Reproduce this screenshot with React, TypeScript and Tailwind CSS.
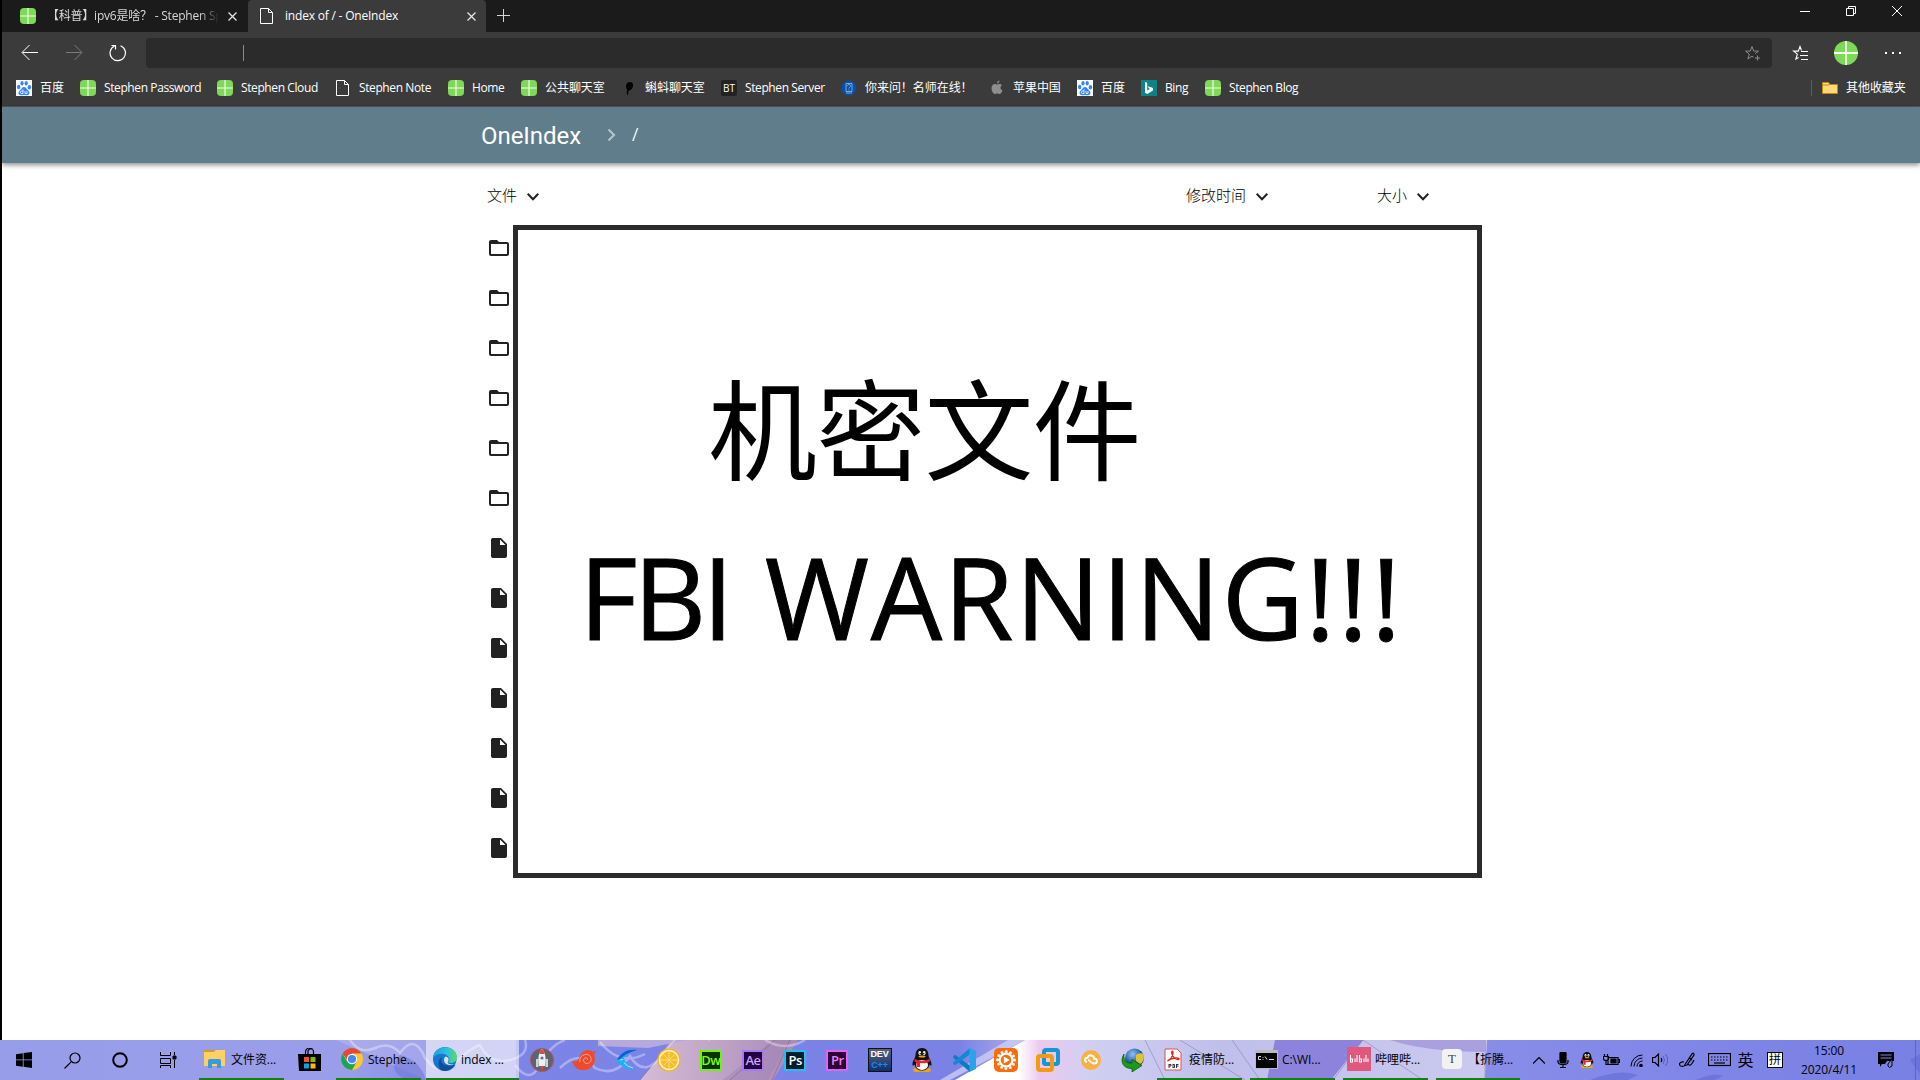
import React, { ReactNode } from "react";

const UI = "font-['Open_Sans','Noto_Sans_CJK_SC',sans-serif]";

function Clover({ round = false, size = 16 }: { round?: boolean; size?: number }) {
  return (
    <svg width={size} height={size} viewBox="0 0 16 16" className="shrink-0">
      <rect width="16" height="16" rx={round ? 8 : 4} fill="#7ed957" />
      <path d="M8 0v16M0 8h16" stroke="#f1fbe9" strokeWidth="1.2" />
    </svg>
  );
}

function Doc() {
  return (
    <svg width="16" height="16" viewBox="0 0 16 16" className="shrink-0" fill="none" stroke="#fff" strokeWidth="1">
      <path d="M1.5.5h8l4 4v11h-12zM9.500 .5v4h4" />
    </svg>
  );
}

function Baidu() {
  return (
    <svg width="16" height="16" viewBox="0 0 16 16" className="shrink-0">
      <rect width="16" height="16" fill="#fff" />
      <g fill="#3385ff">
        <ellipse cx="2.700" cy="7" rx="1.700" ry="2.200" />
        <ellipse cx="6" cy="3.300" rx="1.600" ry="2.300" />
        <ellipse cx="10.200" cy="3.300" rx="1.600" ry="2.300" />
        <ellipse cx="13.400" cy="7.300" rx="1.700" ry="2.200" />
        <path d="M8 7c2 0 2.500 2 4 3.200 2.500 2 1.500 5-1 5-1.500 0-2-.3-3-.3s-1.500.3-3 .3c-2.500 0-3.500-3-1-5C5.500 9 6 7 8 7z" />
      </g>
      <path d="M7 9.500v4H5.600a1.100 1.100 0 010-2.500H7M9 11v2.500h2V11" stroke="#fff" fill="none" strokeWidth=".8" />
    </svg>
  );
}

function Tadpole() {
  return (
    <svg width="16" height="16" viewBox="0 0 16 16" className="shrink-0">
      <path d="M7 2.500c3-1.500 5.500.3 5 3.500-.3 2.500-2 4.200-4 4.500-.8.500-.6 2.500-1.200 5-1.300-1.300-1.200-4.200-.5-6C4.200 7.500 4.800 3.800 7 2.500z" fill="#000" />
    </svg>
  );
}

function BT() {
  return (
    <span className="flex h-4 w-4 shrink-0 items-center justify-center rounded-[2px] bg-[#222] text-[10px] leading-none text-white">BT</span>
  );
}

function BlueSeal() {
  return (
    <svg width="16" height="16" viewBox="0 0 16 16" className="shrink-0">
      <circle cx="8" cy="8" r="7.500" fill="#0a4fa3" />
      <path d="M5 3.500h6v8H5zM6.500 6c0-2 3-2 3 0 0 1.200-1.500 1.200-1.500 2.500M8 9.500v1M5 13h6" fill="none" stroke="#a9cdf5" strokeWidth=".7" />
    </svg>
  );
}

function Apple() {
  return (
    <svg width="16" height="16" viewBox="0 0 16 16" className="shrink-0" fill="#8e8e8e">
      <path d="M10.500.5c.1 1.500-1 2.900-2.500 3C7.900 2 9.200.7 10.500.5zM8 4.600c.7 0 1.300-.7 2.600-.7 1 0 1.900.5 2.400 1.300-2.200 1.300-1.800 4.300.5 5.200-.5 1.400-1.700 3.600-3 3.600-.9 0-1.300-.5-2.300-.5s-1.400.5-2.300.5C4 14 2.500 10.700 2.500 8.300c0-2.700 1.600-4.300 3.300-4.300 1 0 1.600.6 2.200.6z" />
    </svg>
  );
}

function Bing() {
  return (
    <svg width="16" height="16" viewBox="0 0 16 16" className="shrink-0">
      <rect width="16" height="16" fill="#0c8484" />
      <path d="M4 2l2.200.8v7.700L9 9 7.700 8.300 6.900 6.200l5.100 1.800v2.600L6.200 14 4 12.700z" fill="#fff" />
    </svg>
  );
}

function YellowFolder() {
  return (
    <svg width="16" height="14" viewBox="0 0 16 14" className="shrink-0">
      <path d="M.5 1.500h6l1.500 2h7.500v9H.5z" fill="#ffd978" stroke="#b98b14" />
      <path d="M1 4h6l1-1" stroke="#b98b14" fill="none" />
    </svg>
  );
}

function Bookmark({ icon, text, className }: { icon: ReactNode; text: string; className: string }) {
  const latin = /^[\x20-\x7f]+$/.test(text);
  return (
    <div className={"flex shrink-0 items-center gap-2 whitespace-nowrap " + className}>
      {icon}
      <span className={latin ? "tracking-[-0.400px]" : "tracking-[-0.050px]"}>{text}</span>
    </div>
  );
}

function CloseX({ size = 9 }: { size?: number }) {
  return (
    <svg width={size} height={size} viewBox="0 0 9 9" stroke="#e8e8e8" strokeWidth="1.200" className="shrink-0">
      <path d="M.5.5l8 8M8.500.5l-8 8" />
    </svg>
  );
}

function TabStrip() {
  return (
    <div className="flex h-8 bg-[#1b1b1b] text-[12px] leading-8">
      <div className="flex w-[246px] items-center pl-[18px]">
        <Clover />
        <div className="ml-[11px] w-[173px] overflow-hidden whitespace-pre tracking-[-0.220px] text-[#d8d8d8] [mask-image:linear-gradient(to_right,black_152px,transparent_172px)]">
          【科普】ipv6是啥？ - Stephen Sp
        </div>
        <div className="ml-2"><CloseX /></div>
      </div>
      <div className="flex w-[238px] items-center rounded-t bg-[#3b3b3b] pl-[11px] text-white">
        <Doc />
        <div className="ml-[10px] w-[181px] whitespace-nowrap tracking-[-0.200px]">index of / - OneIndex</div>
        <div className="ml-[1px]"><CloseX /></div>
      </div>
      <svg width="14" height="14" viewBox="0 0 14 14" stroke="#d5d5d5" className="mt-[9px] ml-[11px]"><path d="M6.500 0v13M0 6.500h13" /></svg>
      <div className="ml-auto flex items-start gap-9 pt-[6px] pr-[18px]">
        <svg width="10" height="10" className="shrink-0" viewBox="0 0 10 10" stroke="#fff"><path d="M0 5.500h10" /></svg>
        <svg width="10" height="10" className="shrink-0" viewBox="0 0 10 10" stroke="#fff" fill="none"><path d="M.5 2.500h7v7h-7zM2.500 2.500v-2h7v7h-2" /></svg>
        <svg width="10" height="10" className="shrink-0" viewBox="0 0 10 10" stroke="#fff"><path d="M0 0l10 10M10 0L0 10" /></svg>
      </div>
    </div>
  );
}

function Toolbar() {
  return (
    <div className="flex h-[42px] items-center">
      <svg width="18" height="16" viewBox="0 0 18 16" stroke="#fff" fill="none" className="ml-[19px] shrink-0"><path d="M17 7.500H1.500M8.500 0L1 7.500 8.500 15" strokeWidth="1" /></svg>
      <svg width="18" height="16" viewBox="0 0 18 16" stroke="#7a7a7a" fill="none" className="ml-[27px] shrink-0"><path d="M0 7.500h15.500M8.500 0L16 7.500 8.500 15" strokeWidth="1" /></svg>
      <svg width="18" height="18" viewBox="0 0 18 18" stroke="#fff" fill="none" strokeWidth="1.200" className="ml-[25px] shrink-0"><path d="M11.500 1.800A7.700 7.700 0 115.500 2M2.500 1.500h4v4" /></svg>
      <div className="ml-[19px] flex h-[30px] w-[1626px] items-center rounded bg-[#2b2b2b]">
        <div className="ml-[97px] h-4 w-px bg-[#8a8a8a]" />
        <svg width="16" height="16" viewBox="0 0 16 16" stroke="#8a8a8a" fill="none" className="mr-3 ml-auto"><path d="M9.500 12.200L8 11.200 3.900 14l1.400-4.900-3.800-3h4.800L8 1.500l1.700 4.600h4.800l-3.300 2.600M13.500 10.500v5M11 13h5" /></svg>
      </div>
      <svg width="17" height="16" viewBox="0 0 17 16" stroke="#fff" fill="none" className="ml-5 shrink-0"><path d="M6.500 12.500L3.900 14l1.400-4.900-3.800-3h4.800L8 1.500l1.500 4M9 6.500h7M8 10.500h8M9 14.500h7" strokeWidth="1.100" /></svg>
      <div className="ml-[25px]"><Clover round size={24} /></div>
      <div className="ml-[27px] flex gap-[5px]">
        <i className="h-[2px] w-[2px] bg-white" /><i className="h-[2px] w-[2px] bg-white" /><i className="h-[2px] w-[2px] bg-white" />
      </div>
    </div>
  );
}

function Bookmarks() {
  return (
    <div className="flex h-[33px] items-center border-b border-[#555] pb-1 pl-[14px] text-[12px] text-white">
      <Bookmark icon={<Baidu />} text="百度" className="w-16" />
      <Bookmark icon={<Clover />} text="Stephen Password" className="w-[137px]" />
      <Bookmark icon={<Clover />} text="Stephen Cloud" className="w-[118px]" />
      <Bookmark icon={<Doc />} text="Stephen Note" className="w-[113px]" />
      <Bookmark icon={<Clover />} text="Home" className="w-[73px]" />
      <Bookmark icon={<Clover />} text="公共聊天室" className="w-[100px]" />
      <Bookmark icon={<Tadpole />} text="蝌蚪聊天室" className="w-[100px]" />
      <Bookmark icon={<BT />} text="Stephen Server" className="w-[120px]" />
      <Bookmark icon={<BlueSeal />} text="你来问！名师在线！" className="w-[148px]" />
      <Bookmark icon={<Apple />} text="苹果中国" className="w-[88px]" />
      <Bookmark icon={<Baidu />} text="百度" className="w-16" />
      <Bookmark icon={<Bing />} text="Bing" className="w-16" />
      <Bookmark icon={<Clover />} text="Stephen Blog" className="w-[120px]" />
      <div className="mr-[10px] ml-auto h-4 w-px bg-[#5c5c5c]" />
      <Bookmark icon={<YellowFolder />} text="其他收藏夹" className="w-[98px]" />
    </div>
  );
}

function Heading({ text, className }: { text: string; className: string }) {
  return (
    <div className={"flex items-center gap-[10px] " + className}>
      <span>{text}</span>
      <svg width="12" height="8" viewBox="0 0 12 8" stroke="#222" strokeWidth="2" fill="none" className="mt-1"><path d="M.7.8L6 6.200 11.300.8" /></svg>
    </div>
  );
}

function FileIcon({ folder }: { folder: boolean }) {
  return (
    <div className="flex h-[50px] items-center">
      <svg width="24" height="24" viewBox="0 0 24 24" fill="#212121">
        {folder ? (
          <path d="M20 6h-8l-2-2H4c-1.100 0-2 .9-2 2v12c0 1.100.9 2 2 2h16c1.100 0 2-.9 2-2V8c0-1.100-.9-2-2-2zm0 12H4V8h16v10z" />
        ) : (
          <path d="M6 2c-1.100 0-2 .9-2 2v16c0 1.100.9 2 2 2h12c1.100 0 2-.9 2-2V8l-6-6H6zm7 7V3.500L18.500 9H13z" />
        )}
      </svg>
    </div>
  );
}

function Page() {
  return (
    <main className="h-[933px] bg-white">
      <header className="flex h-14 items-center bg-[#607d8b] pl-[479px] text-white shadow-[0_2px_5px_rgba(0,0,0,0.45)]">
        <span className="mt-px w-[125px] font-['Roboto'] text-[24px] leading-none tracking-[-0.050px]">OneIndex</span>
        <svg width="11" height="14" viewBox="0 0 11 14" stroke="#b5c3ca" strokeWidth="2.200" fill="none"><path d="M2.500 1.500L8 7l-5.500 5.500" /></svg>
        <span className="ml-[15px] font-['Roboto'] text-[16px]">/</span>
      </header>
      <div className="flex h-[62px] pt-[20px] pl-[485px] font-['Noto_Sans_CJK_SC',sans-serif] text-[15px] leading-6 font-light text-black">
        <Heading text="文件" className="h-6 w-[699px]" />
        <Heading text="修改时间" className="h-6 w-[191px]" />
        <Heading text="大小" className="h-6" />
      </div>
      <div className="flex pl-[485px]">
        <div className="-mt-[2px] w-[26px]">
          {Array.from({ length: 13 }, (_, i) => <FileIcon key={i} folder={i < 6} />)}
        </div>
        <section className="h-[653px] w-[969px] border-[5px] border-[#2b2b2b] bg-white text-black">
          <div className="pt-[128px] pl-[190px] font-['Noto_Sans_CJK_SC',sans-serif] text-[109px] leading-[134px] tracking-[-0.800px] whitespace-nowrap">机密文件</div>
          <div className="mt-[34px] pl-[61px] font-['Open_Sans',sans-serif] text-[113px] leading-[140px] whitespace-pre [-webkit-text-stroke:1px_black]">
            <span className="mr-1 tracking-[-4px]">FBI</span>
            <span className="tracking-[1.600px]"> WARNING</span>
            <span className="tracking-[3px]">!!!</span>
          </div>
        </section>
      </div>
    </main>
  );
}

function Penguin({ size = 22 }: { size?: number }) {
  return (
    <svg width={size} height={size} viewBox="0 0 24 24">
      <ellipse cx="8" cy="22" rx="5" ry="2" fill="#f5a400" /><ellipse cx="16" cy="22" rx="5" ry="2" fill="#f5a400" />
      <path d="M12 0c4.500 0 6.500 3.500 6.500 7.500 0 2 3 5 3 9 0 2-1 1-2 0-1 4-3.500 6-7.500 6s-6.500-2-7.500-6c-1 1-2 2-2 0 0-4 3-7 3-9 0-4 2-7.500 6.500-7.500z" fill="#111" />
      <ellipse cx="12" cy="17" rx="6" ry="5" fill="#fff" />
      <ellipse cx="9.800" cy="5" rx="1.400" ry="2" fill="#fff" /><ellipse cx="14.200" cy="5" rx="1.400" ry="2" fill="#fff" />
      <circle cx="10.200" cy="5.400" r=".7" /><circle cx="13.800" cy="5.400" r=".7" />
      <ellipse cx="12" cy="8.500" rx="3.500" ry="1" fill="#f5a400" />
      <path d="M4.500 10.500c4 3 11 3 15 0l.5 3c-4 2-8 2-10 1.500v4H6.500v-4.500l-2-1z" fill="#e3242b" />
    </svg>
  );
}

function Adobe({ text, className }: { text: string; className: string }) {
  return <span className={"flex h-[21px] w-[22px] items-center justify-center border-2 font-['Open_Sans'] text-[13px] leading-none font-semibold tracking-[-0.500px] " + className}>{text}</span>;
}

function Rocket() {
  return (
    <svg width="24" height="24" viewBox="0 0 24 24">
      <circle cx="12" cy="12" r="11.500" fill="#5d6470" stroke="#b9505a" />
      <path d="M6 11h2.500v8H6zM15.500 11H18v8h-2.500z" fill="#cfd3d8" />
      <path d="M12 1c4 4 4 10 3 17H9C8 11 8 5 12 1z" fill="#eef0f2" />
      <path d="M12 1c1.500 1.500 2.400 3 2.800 5H9.200C9.600 4 10.500 2.500 12 1zM10 18h4l-2 5z" fill="#e04a3a" />
      <circle cx="12" cy="10" r="1.600" fill="#69727e" />
    </svg>
  );
}

function Swirl() {
  return (
    <svg width="24" height="24" viewBox="0 0 24 24" fill="none">
      <path d="M0 13c4 1.500 6.500-.5 8-5 2-6 9-8 13-4 .8-.8 2-1 3-.5-1 .8-1.500 2-1.700 3.500 2 7-1.300 13-7.300 14.500C8 23.500 1.500 20 0 13z" fill="#ee4b2b" />
      <path d="M8 14c-2-7 9-11 11-4 1.500 6-7 7.500-7.500 2.500 0-3.500 4.500-3.500 4-.5" stroke="#f0b5b5" strokeWidth=".8" />
    </svg>
  );
}

function Bird() {
  return (
    <svg width="24" height="24" viewBox="0 0 24 24">
      <path d="M23 2C14 1 7 4 3 12l-2 2.500L5 14c2 5 8 8 17 7.500-6-1.500-10-3.500-11.500-7l9 2.500C15 14.500 12 13.500 9 13 10 8 15 4 23 2z" fill="#19b4f2" />
      <path d="M23 2C14 1 7 4 3 12l4-1.500C10 7 16 4 23 2z" fill="#0b62d8" />
      <path d="M10 15q4 4 9 5M6 12l3-.5" stroke="#d8f6ff" fill="none" strokeWidth=".7" />
    </svg>
  );
}

function Lemon() {
  return (
    <svg width="24" height="24" viewBox="0 0 24 24">
      <circle cx="12" cy="12" r="11.500" fill="#f3b51c" /><circle cx="12" cy="12" r="10.300" fill="#fff3c4" /><circle cx="12" cy="12" r="8.700" fill="#f5bf2c" />
      <path d="M12 3v18M3 12h18M5.600 5.600l12.800 12.800M18.400 5.600L5.600 18.400" stroke="#fde28a" strokeWidth=".8" />
    </svg>
  );
}

function DevCpp() {
  return (
    <span className="flex h-6 w-6 flex-col items-center justify-center border border-[#111] bg-linear-to-b from-[#59617c] to-[#0d2f6c] font-['Liberation_Sans'] text-[9px] leading-[11px] font-bold text-white">
      <span className="h-[11px]">DEV</span><span className="h-[11px] text-[#1b86f0]">C++</span>
    </span>
  );
}

function VSCode() {
  return (
    <svg width="24" height="24" viewBox="0 0 24 24">
      <path d="M1.200 8.500L3 6.700l15 11V24L1.200 9.800z" fill="#0c7bc4" />
      <path d="M18 0v6.300L3 17.300 1.200 15.500v-1.300z" fill="#1488d2" /><path d="M17.500 0L24 3v18l-6.500 3z" fill="#2aa3e8" />
    </svg>
  );
}

function OrangePlay() {
  return (
    <svg width="24" height="24" viewBox="0 0 24 24">
      <rect width="24" height="24" rx="5" fill="#fb6d0b" />
      <circle cx="12" cy="12" r="8.500" fill="none" stroke="#fff" strokeWidth="3" strokeDasharray="0 4.450" strokeLinecap="round" />
      <circle cx="12" cy="12" r="7.500" fill="#fff" /><circle cx="12" cy="12" r="5.300" fill="#fb6d0b" />
      <path d="M9.800 8.500l6 3.500-6 3.500z" fill="#fff" />
    </svg>
  );
}

function VMware() {
  return (
    <svg width="24" height="24" viewBox="0 0 24 24" fill="none" strokeWidth="4">
      <rect x="8" y="2" width="14" height="14" rx="2" stroke="#1397d5" />
      <rect x="2" y="8" width="14" height="14" rx="2" stroke="#f59a0c" />
      <path d="M8 10v4q0 2 2 2h4" stroke="#1397d5" />
    </svg>
  );
}

function CloudDisc() {
  return (
    <svg width="20" height="22" viewBox="0 0 20 22">
      <circle cx="10" cy="11" r="10" fill="#fbb040" />
      <path d="M6 13c-3-.5-2.500-4.500.5-4.300C8 5 13 6 13 9.500c4 0 4 5 0 5-3 0-4-3.500-6-3.500" stroke="#fff" strokeWidth="2" fill="none" />
    </svg>
  );
}

function Globe() {
  return (
    <svg width="24" height="24" viewBox="0 0 24 24">
      <defs><radialGradient id="ocean" cx=".4" cy=".3"><stop stopColor="#8fc4f5" /><stop offset="1" stopColor="#1d4f9c" /></radialGradient></defs>
      <circle cx="13.500" cy="10" r="9.500" fill="url(#ocean)" />
      <path d="M15 7c3-2 5-2 7.500-1 1 4 0 8-3.500 10l-4-3z" fill="#dcc535" />
      <path d="M3 6c-5 8 0 15 8 14.500V24l10-6.500-10-6V15c-5 1-9-3-8-9z" fill="#1d9a1a" stroke="#0b4f0e" strokeWidth=".7" />
    </svg>
  );
}

function Chrome() {
  return (
    <svg width="22" height="22" viewBox="0 0 22 22">
      <circle cx="11" cy="11" r="11" fill="#fbc634" />
      <path d="M1.500 5.500A11 11 0 0120.500 5.500H11L7 13z" fill="#de4b3c" />
      <path d="M1.500 5.500A11 11 0 0011 22l4.800-8.500L6.200 13.600z" fill="#1ca45c" />
      <circle cx="11" cy="11" r="5.200" fill="#fff" /><circle cx="11" cy="11" r="4.100" fill="#4688f1" />
    </svg>
  );
}

function Edge() {
  return (
    <svg width="24" height="24" viewBox="0 0 24 24">
      <defs>
        <linearGradient id="edgeTop"><stop stopColor="#1b9de2" /><stop offset=".6" stopColor="#2fc2df" /><stop offset="1" stopColor="#5ddb5a" /></linearGradient>
      </defs>
      <circle cx="12" cy="12" r="12" fill="#1477d0" />
      <path d="M0 11C1-2 22-4 24 10c.4 5-5 7-9 5.500 1-1 2-2 1-4.500C13 5 4 6 0 11z" fill="url(#edgeTop)" />
      <path d="M9 10c-3 6 3 11 13 7.500C18 24 12 25 8 23 4 20 5 12 9 10z" fill="#0d4f9d" />
      <path d="M12.500 9.500c3 .5 4 3 2.300 5.500-.8 1.400 3 3.500 7.200 2-5 3-11 0-11-4 0-1.500.5-2.500 1.500-3.500z" fill="#e3e3f6" />
      <path d="M24 10c0 3-1 6-2 7.500l2.500 2V10z" fill="#d8d8f4" />
    </svg>
  );
}

function Explorer() {
  return (
    <svg width="22" height="20" viewBox="0 0 22 20">
      <path d="M0 1h9l2 3H0z" fill="#dd9a12" /><path d="M0 3h10l2-2h9v16H0z" fill="#fcd063" />
      <path d="M4 19v-7q0-2 2-2h9q2 0 2 2v7h-4v-4H8v4z" fill="#3b9ad8" />
    </svg>
  );
}

function Store() {
  return (
    <svg width="24" height="24" viewBox="0 0 24 24">
      <path d="M7.500 7V4a4 4 0 018 0v3M10 6V3a3 3 0 014-2" stroke="#000" fill="none" strokeWidth="1.200" />
      <path d="M0 6h23v17H1z" fill="#000" />
      <path d="M6 9h5v5H6z" fill="#f35325" /><path d="M12.500 9h5v5h-5z" fill="#81bc06" /><path d="M6 15.500h5v5H6z" fill="#05a6f0" /><path d="M12.500 15.500h5v5h-5z" fill="#ffba08" />
    </svg>
  );
}

function Pdf() {
  return (
    <svg width="18" height="23" viewBox="0 0 18 23">
      <path d="M1 1h12l4 4v17H1z" fill="#fff" stroke="#e05050" />
      <path d="M3.500 13c3-1 6-6 5.500-9-.5-2-2-.5-1 2 1 3 4 6 6.500 5.500 1.500-.5 0-2-3-1.500-3 .4-6 1.200-8 3z" fill="none" stroke="#e02525" strokeWidth="1.300" />
      <path d="M5 16v4M5 16.500h2v1.500H5M9 16v4M9 16.500h1.500v3H9M12.500 16v4M12.500 16.500h2M12.500 18h2" stroke="#222" strokeWidth=".9" fill="none" />
    </svg>
  );
}

function Cmd() {
  return (
    <svg width="23" height="19" viewBox="0 0 23 19">
      <rect width="23" height="19" fill="#bbb" /><rect x="1" y="3" width="21" height="15" fill="#050505" />
      <path d="M6 6.500H3.500v3H6M8 7v.8M8 9v.8M10 6.500l2 3M14 9.500h5" stroke="#ddd" fill="none" />
    </svg>
  );
}

function Bili() {
  return (
    <svg width="24" height="24" viewBox="0 0 24 24">
      <rect width="24" height="24" fill="#e0587c" />
      <path d="M3.500 8v7h2v-3h-2M8 11.500V15M10 8v7M12.500 8v7h2v-3h-2M17 11.500V15M19 8v7M21 11.500V15" stroke="#fff" fill="none" strokeWidth="1.100" />
    </svg>
  );
}

function TaskWindow({ icon, text, className }: { icon: ReactNode; text: string; className: string }) {
  return (
    <div className={"flex h-10 shrink-0 items-center overflow-hidden border-b-2 border-[#128012] whitespace-nowrap " + className}>
      <span className="flex w-8 shrink-0 justify-center">{icon}</span>
      <span className="pt-[2px]">{text}</span>
    </div>
  );
}

function Cell({ children, className }: { children: ReactNode; className: string }) {
  return <div className={"flex shrink-0 items-center justify-center " + className}>{children}</div>;
}

function Wallpaper() {
  return (
    <svg className="absolute inset-0" width="1920" height="40" viewBox="0 0 1920 40" preserveAspectRatio="none">
      <defs>
        <linearGradient id="sky" x1="0" x2="1920" y1="0" y2="0" gradientUnits="userSpaceOnUse">
          <stop stopColor="#989de9" /><stop offset=".18" stopColor="#9a9eea" /><stop offset=".25" stopColor="#7c84e6" /><stop offset=".5" stopColor="#7a82e6" /><stop offset=".52" stopColor="#9c9de8" /><stop offset=".85" stopColor="#8288e8" /><stop offset="1" stopColor="#7880e4" />
        </linearGradient>
        <linearGradient id="hair"><stop stopColor="#d6bbd5" /><stop offset="1" stopColor="#a98ab8" /></linearGradient>
        <linearGradient id="veil"><stop stopColor="#fff" /><stop offset=".12" stopColor="#fff" /><stop offset=".16" stopColor="#ecc8ee" /><stop offset=".25" stopColor="#d0d0f2" /><stop offset=".5" stopColor="#c0bfec" /><stop offset="1" stopColor="#cbc9ee" /></linearGradient>
      </defs>
      <rect width="1920" height="40" fill="url(#sky)" />
      <path d="M336 0h180v40h-90z" fill="#b9b9ed" opacity=".5" />
      <path d="M400 15q20 5 26 25h-20q-20-10-6-25z" fill="#6f76d8" opacity=".6" />
      <path d="M673 0h125l-25 40H640z" fill="url(#hair)" />
      <path d="M598 0h90l-40 8-50-2z" fill="#b5a9dd" />
      <path d="M683 0h107l-22 40h-45l50-40" fill="#9f83b1" opacity=".45" />
      <path d="M673 0L640 40M775 0l-45 40M790 0l-18 40" stroke="#77598b" strokeWidth=".7" opacity=".7" />
      <g fill="none" stroke="#fff" strokeWidth="2.500" opacity=".35">
        <path d="M350 0q10 15 25 8t25 5q15-20 25 5 15 20 30 5t25-18q10 20 30 15t15-20M515 25q15 20 25 0t25-25M560 28q20-20 35 0 20 10 35-12 15 25 35-5t45-11M600 2q20 25 45 12M765 0q20 12 40 0" />
      </g>
      <path d="M1025 0h462l-2 40H955z" fill="url(#veil)" />
      <path d="M1008 0h17l-75 40h-10z" fill="#d9d4f4" opacity=".7" />
      <path d="M1275 0h88l-32 40h-64z" fill="#8d83dc" />
      <path d="M1145 0l20 40M1180 0l65 40M1232 0l28 40M1363 0l60 40M1485 0v40M1363 0l-30 40" stroke="#7c7fae" strokeWidth="1" opacity=".55" />
      <path d="M1390 0h96v12q-60 0-96-12z" fill="#aaa0df" />
      <path d="M1590 40q30-12 48-5l-10 5zM1695 40q20-8 28-4l-8 4zM1910 20l10-6v20z" fill="#606bd2" opacity=".6" />
    </svg>
  );
}

function Tray() {
  const s = { fill: "none", stroke: "#000", strokeWidth: 1.2 };
  return (
    <>
      <Cell className="ml-[7px] w-6"><svg width="12" height="7" viewBox="0 0 12 7" {...s}><path d="M0 6.500l6-6 6 6" /></svg></Cell>
      <Cell className="w-[23px]"><svg width="12" height="16" viewBox="0 0 12 16" {...s}><rect x="3" y="0" width="6" height="11" rx="1.500" fill="#000" /><path d="M1 8v2q0 2.500 5 2.500T11 10V8M6 12v3.500M3 15.500h6" /></svg></Cell>
      <Cell className="w-[25px]"><Penguin size={16} /></Cell>
      <Cell className="w-[25px]"><svg width="17" height="14" viewBox="0 0 17 14" {...s}><path d="M5 4.500h10v7H5zM15 6.500h1.500v3H15M.5 3.500h5v2q0 2-2.500 2t-2.500-2zM1.500 1v2M4.500 1v2M3 7.500v4h2" /><path d="M8 6h5v4H8z" fill="#000" /></svg></Cell>
      <Cell className="w-[25px]"><svg width="13" height="13" viewBox="0 0 13 13" {...s}><path d="M1 12.500A11.500 11.500 0 0112.500 1M4 12.500A8.500 8.500 0 0112.500 4M7 12.500A5.500 5.500 0 0112.500 7" strokeWidth="1" /><circle cx="11" cy="11.500" r="1.200" fill="#000" /></svg></Cell>
      <Cell className="w-[22px]"><svg width="16" height="14" viewBox="0 0 16 14" {...s}><path d="M.5 4.500H3L6.500 1v12L3 9.500H.5zM9 5q1.500 2 0 4" /><path d="M11 3q3 4 0 8M13.500 1q4.500 6 0 12" stroke="#555caa" strokeWidth=".9" /></svg></Cell>
      <Cell className="w-[33px]"><svg width="17" height="17" viewBox="0 0 17 17" {...s}><path d="M5 14L13 2q2-2 2 1L8 13l-3 1zM5 14c-6 2-6-5 0-4M9 12c2 3 4 0 6-4M10 6l3 2" /></svg></Cell>
      <Cell className="w-[30px]"><svg width="23" height="14" viewBox="0 0 23 14" {...s}><rect x=".5" y=".5" width="22" height="12" /><path d="M3 4h17M3 7h17" strokeDasharray="1.500 1.500" /><path d="M6 10h11" /></svg></Cell>
      <Cell className="w-[23px] text-[16px]">英</Cell>
      <Cell className="w-[36px]"><span className="flex h-4 w-4 items-center justify-center border border-black bg-white text-[12px] leading-none">拼</span></Cell>
      <div className="flex w-[72px] shrink-0 flex-col items-center text-[12px] leading-[19px] tracking-[-0.100px]"><span>15:00</span><span>2020/4/11</span></div>
      <Cell className="w-[42px]"><svg width="16" height="16" viewBox="0 0 16 16"><path d="M0 0h16v9H9l-2 3H4l-2 3v-3H0z" /><path d="M2.500 3h11M2.500 6h11" stroke="#858be6" /><path d="M10 12l4-5v7q-3 3-4 0z" stroke="#000" fill="#7d84e5" /></svg></Cell>
      <div className="ml-[8px] h-10 w-px bg-[#5e65bb]" />
    </>
  );
}

function Taskbar() {
  const apps: ReactNode[] = [
    <Rocket />, <Swirl />, <Bird />, <Lemon />,
    <Adobe text="Dw" className="border-[#6cf507] bg-[#0f3000] text-[#7cff10]" />,
    <Adobe text="Ae" className="border-[#a77bf0] bg-[#20033f] text-[#cfa0ff]" />,
    <Adobe text="Ps" className="border-[#22bff5] bg-[#051d28] text-white" />,
    <Adobe text="Pr" className="border-[#e063f5] bg-[#2d0133] text-[#ea80ff]" />,
    <DevCpp />, <Penguin size={24} />, <VSCode />, <OrangePlay />, <VMware />, <CloudDisc />, <Globe />,
  ];
  return (
    <footer className="relative h-10 overflow-hidden text-black">
      <Wallpaper />
      <div className="relative flex h-10 w-[1920px] items-center font-['Open_Sans','Noto_Sans_CJK_SC',sans-serif] text-[12px] tracking-[-0.050px]">
        <Cell className="w-12"><svg width="16" height="16" viewBox="0 0 16 16"><path d="M0 2.200L6.800 1.200v6.300H0zM7.600 1.100L16 0v7.500H7.600zM0 8.300h6.800v6.500L0 13.800zM7.600 8.300H16V16l-8.400-1.200z" /></svg></Cell>
        <Cell className="w-12"><svg width="17" height="17" viewBox="0 0 17 17" fill="none" stroke="#000" strokeWidth="1.200"><circle cx="11" cy="6" r="5" /><path d="M7.400 9.600L.5 16.500" /></svg></Cell>
        <Cell className="w-12"><svg width="16" height="16" viewBox="0 0 16 16" fill="none" stroke="#000" strokeWidth="2"><circle cx="8" cy="8" r="6.800" /></svg></Cell>
        <Cell className="w-12"><svg width="17" height="16" viewBox="0 0 17 16" fill="none" stroke="#000"><path d="M.5 0v3.500h10V0M.5 6.500h10v5H.5zM.5 16v-2.500h10V16M14.500 0v3M14.500 8v8" /><path d="M13 4h3v3h-3z" fill="#000" /></svg></Cell>
        <TaskWindow icon={<Explorer />} text="文件资..." className="ml-[7px] w-[85px]" />
        <Cell className="w-[50px] pl-[2px]"><Store /></Cell>
        <TaskWindow icon={<Chrome />} text="Stephe..." className="ml-[2px] w-[85px]" />
        <TaskWindow icon={<Edge />} text="index ..." className="ml-[5px] w-[93px] bg-white/55 pl-[3px]" />
        <div className="ml-px flex w-[633px] shrink-0 pl-px">
          {apps.map((icon, i) => <Cell key={i} className="h-10 w-[42.200px]">{icon}</Cell>)}
        </div>
        <TaskWindow icon={<Pdf />} text="疫情防..." className="ml-[4px] w-[85px]" />
        <TaskWindow icon={<Cmd />} text="C:\WI..." className="ml-[8px] w-[85px]" />
        <TaskWindow icon={<Bili />} text="哔哩哔..." className="ml-[8px] w-[85px]" />
        <TaskWindow icon={<span className="flex h-5 w-5 items-center justify-center rounded-sm bg-[#f2f2f2] font-['Liberation_Serif'] text-[13px] text-[#444]">T</span>} text="【折腾..." className="ml-[8px] w-[84px]" />
        <Tray />
      </div>
    </footer>
  );
}

export default function App() {
  return (
    <div className={"flex h-[1080px] w-[1920px] flex-col overflow-hidden bg-black " + UI}>
      <div className="flex h-[1040px]">
        <div className="w-[2px] shrink-0 bg-black" />
        <div className="w-[1918px]">
          <div className="bg-[#3b3b3b]">
            <TabStrip />
            <Toolbar />
            <Bookmarks />
          </div>
          <Page />
        </div>
      </div>
      <Taskbar />
    </div>
  );
}
